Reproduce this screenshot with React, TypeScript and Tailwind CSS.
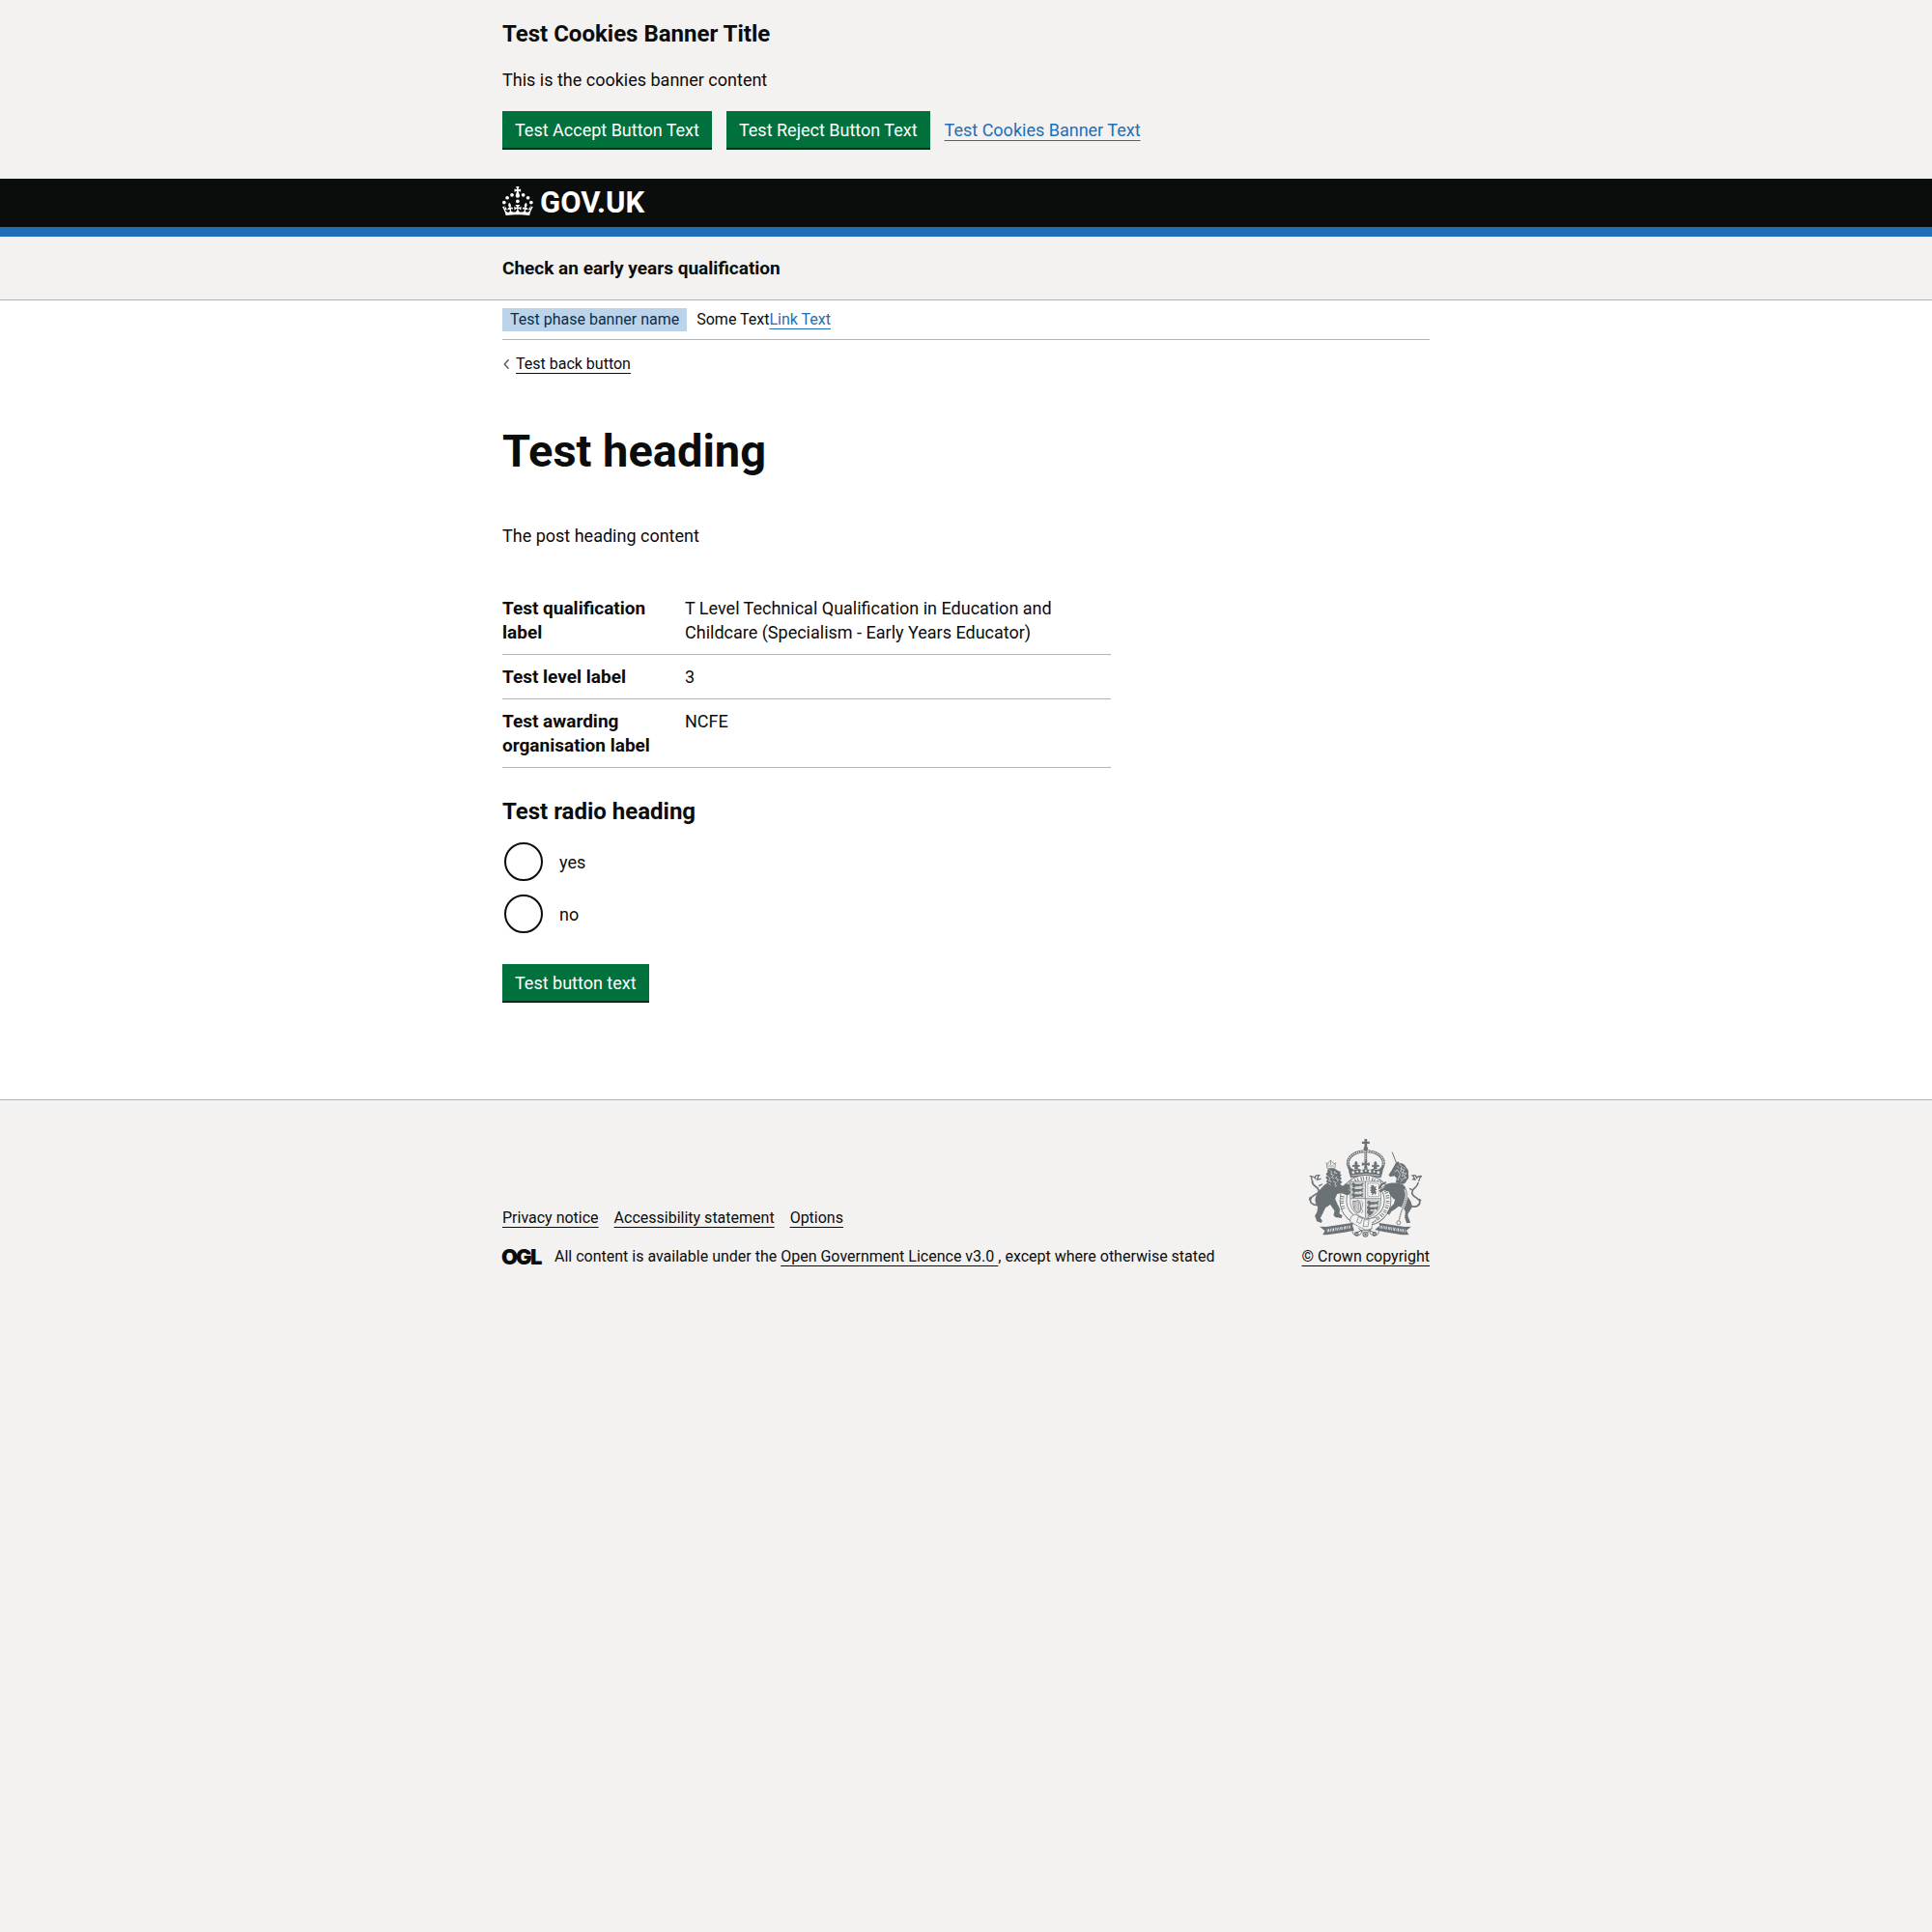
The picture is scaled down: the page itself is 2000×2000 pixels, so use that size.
import type { ReactNode } from 'react';

const wrap = 'mx-auto w-full max-w-[960px]';
const focus = 'focus:outline-3 focus:outline-[#ffdd00]';
const darkLink = `underline decoration-1 underline-offset-4 text-[#0b0c0c] hover:decoration-3 ${focus}`;
const blueLink = `underline decoration-1 underline-offset-4 text-[#1d70b8] hover:decoration-3 ${focus}`;

function Button({ children }: { children: ReactNode }) {
  return (
    <button
      type="button"
      className={`h-[38px] cursor-pointer bg-[#00703c] px-[13px] pt-0.5 text-lg leading-5 text-white shadow-[0_2px_0_#002d18] hover:bg-[#005a30] ${focus}`}
    >
      {children}
    </button>
  );
}

function CrownIcon() {
  return (
    <svg viewBox="0 0 64 60" className="h-[30px] w-8" fill="currentColor" aria-hidden="true">
      <circle cx="20" cy="17.6" r="3.7" />
      <circle cx="10.2" cy="23.5" r="3.7" />
      <circle cx="3.7" cy="33.2" r="3.7" />
      <circle cx="31.7" cy="30.6" r="3.7" />
      <circle cx="43.3" cy="17.6" r="3.7" />
      <circle cx="53.2" cy="23.5" r="3.7" />
      <circle cx="59.7" cy="33.2" r="3.7" />
      <path d="M33.1,9.8c.2-.1.3-.3.5-.5l4.6,2.4v-6.8l-4.6,1.5c-.1-.2-.3-.3-.5-.5l1.9-5.9h-6.7l1.9,5.9c-.2.1-.3.3-.5.5l-4.6-1.5v6.8l4.6-2.4c.1.2.3.3.5.5l-2.6,8c-.9,2.8,1.2,5.7,4.1,5.7h0c3,0,5.1-2.9,4.1-5.7l-2.6-8ZM37,37.9s-3.4,3.8-4.1,6.1c2.2,0,4.2-.5,6.4-2.8l-.7,8.5c-2-2.8-4.4-4.1-5.7-3.8.1,3.1.5,6.7,5.8,7.2,3.7.3,6.7-1.5,7-3.8.4-2.6-2-4.3-3.7-1.6-1.4-4.5,2.4-6.1,4.9-3.2-1.9-4.5-1.8-7.7,2.4-10.9,3,4,2.6,7.3-1.2,11.1,2.4-1.3,6.2,0,4,4.6-1.2-2.8-3.7-2.2-4.2.2-.3,1.7.7,3.7,3,4.2,1.9.3,4.7-.9,7-5.9-1.3,0-2.4.7-3.9,1.7l2.4-8c.6,2.3,1.4,3.7,2.2,4.5.6-1.6.5-2.8,0-5.3l5,1.8c-2.6,3.6-5.2,8.7-7.3,17.5-7.4-1.1-15.7-1.7-24.5-1.7h0c-8.8,0-17.1.6-24.5,1.7-2.1-8.9-4.7-13.9-7.3-17.5l5-1.8c-.5,2.5-.6,3.7,0,5.3.8-.8,1.6-2.3,2.2-4.5l2.4,8c-1.5-1-2.6-1.7-3.9-1.7,2.3,5,5.2,6.2,7,5.9,2.3-.4,3.3-2.4,3-4.2-.5-2.4-3-3.1-4.2-.2-2.2-4.6,1.6-6,4-4.6-3.7-3.7-4.2-7.1-1.2-11.1,4.2,3.2,4.3,6.4,2.4,10.9,2.5-2.8,6.3-1.3,4.9,3.2-1.8-2.7-4.1-1-3.7,1.6.3,2.3,3.3,4.1,7,3.8,5.4-.5,5.7-4.2,5.8-7.2-1.3-.2-3.7,1-5.7,3.8l-.7-8.5c2.2,2.3,4.2,2.7,6.4,2.8-.7-2.3-4.1-6.1-4.1-6.1h10.6,0Z" />
    </svg>
  );
}

function CoatOfArms() {
  const ink = '#6b7276';
  const paper = '#f3f2f1';
  return (
    <svg viewBox="51 26 350 306" className="h-[102px] w-[117px]" fill={ink} stroke="none" aria-hidden="true">
      {/* imperial crown */}
      <path d="M223 26h8v8h8v7h-8v10h-8V41h-8v-7h8z" />
      <circle cx="227" cy="56" r="7" />
      <g fill="none" stroke={ink}>
        <path d="M182 126C156 92 184 66 222 64M272 126C298 92 270 66 232 64" strokeWidth="9" />
        <path d="M182 126C156 92 184 66 222 64M272 126C298 92 270 66 232 64" stroke={paper} strokeWidth="4" strokeDasharray="4 3" />
        <path d="M227 62v34" strokeWidth="8" />
        <path d="M227 64v30" stroke={paper} strokeWidth="3" strokeDasharray="4 3" />
      </g>
      <path d="M222 94h10l-2 8 9-3v11l-9-3 3 11h-12l3-11-9 3V99l9 3z" />
      <path d="M197 94c5 5 7 9 3 14 6-4 10-1 8 5l-6-1 2 8h-13l2-8-8 1c-1-7 3-9 9-5-4-5-2-9 3-14zM257 94c5 5 7 9 3 14 6-4 10-1 9 5l-8-1 2 8h-13l2-8-6 1c-2-6 2-9 8-5-4-5-2-9 3-14z" />
      <path d="M171 104l9 12 11 6 14-3 10 3 12-4 12 4 10-3 14 3 11-6 9-12-4 26-5 17q-47-10-94 0l-5-17z" />
      <g fill={paper}>
        <circle cx="188" cy="130" r="4" /><circle cx="201" cy="127" r="3" /><circle cx="214" cy="127" r="4" />
        <circle cx="227" cy="125" r="3" /><circle cx="240" cy="127" r="4" /><circle cx="253" cy="127" r="3" /><circle cx="266" cy="130" r="4" />
      </g>
      <path d="M183 140q44-9 88 0" stroke={paper} strokeWidth="2" fill="none" />

      {/* garter ring */}
      <ellipse cx="226" cy="217" rx="69" ry="68" fill="none" stroke={ink} strokeWidth="23" />
      <ellipse cx="226" cy="217" rx="69" ry="68" fill="none" stroke={paper} strokeWidth="18" />
      <g fill="none" stroke={ink} strokeWidth="11">
        <path d="M158 243A69 68 0 0 1 188 160" strokeDasharray="2.5 4 3 7 2.5 3 2.5 6" />
        <path d="M194 156A69 68 0 0 1 266 161" strokeDasharray="3 5 2.5 8 3 4 2.5 7" />
        <path d="M280 174A69 68 0 0 1 246 282" strokeDasharray="2.5 4 3 7 2.5 3 2.5 6" />
      </g>

      {/* quartered shield */}
      <path d="M179 158h95v62c0 28-21 44-47 54-27-10-48-26-48-54z" fill={paper} stroke={ink} strokeWidth="2" />
      <path d="M180 159h46v52h-46zM228 212h45v8c0 24-20 42-45 52z" opacity=".22" />
      <path d="M226 158v113M180 211h94" stroke={ink} strokeWidth="2" />
      <g>
        <path id="passant" d="M184 164l6-3 4 5h18l6-4 2 3-4 4 3 5h-5l-4-3-5 3-8-1-5 4-7-1 3-4-5-2z" />
        <use href="#passant" y="16" />
        <use href="#passant" y="32" />
        <use href="#passant" x="48" y="56" />
        <use href="#passant" x="47" y="72" />
        <path d="M231 249l6-3 4 4h12l-8 11-12 7 3-8-5-3z" />
      </g>
      <path d="M233 164h35v41h-35z" fill="none" stroke={ink} strokeWidth="2" strokeDasharray="4 1.5" />
      <path d="M243 171l7-2 4 6 7-3-4 7 5 5-6 2 4 6-3 8-4-5-4 4-4 2 2-6-6-2 4-4-6-3 6-4-6-4 5-2z" />
      <path d="M188 218c5 3 9 1 17-1 6 5 7 22 4 36l-8 2c-9-4-14-18-13-37z" fill="none" stroke={ink} strokeWidth="3" />
      <path d="M193 221v20M197 221v27M201 220v32M205 221v31" stroke={ink} strokeWidth="1.5" />
      <path d="M212 217l6 8-4 20 5 6-6 6" fill="none" stroke={ink} strokeWidth="2" />

      {/* lion */}
      <path d="M105 100l4 5 4-8 5-4 5 4 5 8 5-5-2 17h-24z" fill="none" stroke={ink} strokeWidth="2" />
      <path d="M118 93v14M108 110h20" stroke={ink} strokeWidth="2" />
      <path d="M108 121l10-4 14 2 9 6 8 3-2 6 5 5-5 4 6 7-6 3 7 8-6 4 2 8-10 2-6 6-8-5-8 3-4-8-7-2 3-6-7-5 5-5-6-7 5-5-4-7 5-4z" />
      <path d="M112 160C95 168 82 186 73 202c-6 14-2 26 5 34l-2 16-7 13 6 17 14 5 3-7-6-8 8-16 8-16 15-10 6 10 7 9-3 13 5 7 20 3 2-8-9-6 2-14-9-18-6-14 6-15 16-4 13 8 8-2 6-8-8-8-20-10z" />
      <path d="M142 165l14 7 10-9 4 5 8-1-2 8 4 6-10 4-24-4z" />
      <g fill="none" stroke={ink} strokeLinecap="round">
        <path d="M84 231c-24 4-35-11-26-23 9-12 27-10 22-25-4-10-20-11-19-24" strokeWidth="5" />
        <path d="M62 158c-6-6-1-13-6-16 7-1 9 2 14 6-1-8 3-10 12-9-6 5-1 9-8 14l13-3M54 207l-2 7M82 172l9-5M84 186l5 4" strokeWidth="4" />
      </g>
      <g fill="none" stroke={paper} strokeWidth="2">
        <path d="M115 123l7 6-4 6 9 3-6 7 8 4M132 125l-3 6 9 2M108 141l8 7-4 8 9 3M125 157l9 5-3 9M138 142l-5 6 9 4-4 7M112 165l6 4M138 170l-6 5" />
      </g>

      {/* unicorn */}
      <path d="M309 67l14 36" stroke={ink} strokeWidth="3" />
      <path d="M320 101l7-5 5 5c10 0 18 6 21 14 6 6 8 14 6 20 3 8 1 16-5 20-1 6-6 10-12 11l-22-4 3-14-7-7-13 3-5-6 9-14z" />
      <g fill="none" stroke={paper} strokeWidth="2">
        <path d="M330 103l10 9-5 6 12 4-6 7 12 5-9 7 9 5-12 5M324 112l6 2M316 128l9-6 9 14-8 19M337 118l-2 9 8 6-4 11M344 112l5 6M334 148l6 6-4 5" />
      </g>
      <path d="M288 168c14-8 37-6 52-2 12 6 16 22 14 34 6 12 18 22 16 38-4 12-14 16-12 28l8 20-12 2-6-18 2-18c-4-12-14-16-22-16l-10 8-12 8-6 10-8-6 10-16 12-12 4-14c-10-4-16-14-18-24l-16-4-12 6-4-6 14-8z" />
      <path d="M290 164l-12 6-5 10-7 2 2-9 8-9 14-6z" />
      <g fill="none" stroke={ink}>
        <path d="M364 233c16 8 30 1 31-11 0-14-29-16-24-32 3-12 17-13 19-29" strokeWidth="5" />
        <path d="M390 158c5-4 3-13 10-16-7-2-11 1-15 5-1-8-6-9-13-7 7 4 3 9 10 13l-11-2M371 184l-8-4M393 213l6 5" strokeWidth="4" />
        <path d="M349 181c9 16 5 24 2 34-3 14-11 28-15 42" stroke={paper} strokeWidth="8" />
        <path d="M349 181c9 16 5 24 2 34-3 14-11 28-15 42l-6 22" strokeWidth="4" strokeDasharray="4 2" />
        <circle cx="329" cy="286" r="6" strokeWidth="2.5" />
      </g>

      {/* compartment, buckle and motto ribbons */}
      <path d="M181 267l13-7 22 12 24 2 19-5 3 7-14 9-3 20-17 4-20-9-12-7-18-10z" fill={paper} stroke={ink} strokeWidth="2" />
      <path d="M205 267l12 6-7 16-11-5zM222 277h15l-3 21h-15z" fill="none" stroke={ink} strokeWidth="2" />
      <path d="M84 298l20 1 84-13-2 10 5 14-30 6-54 8-14 0 7-12z" />
      <path d="M368 298l-20 1-80-12 2 9-15 12 26 6 58 10 22 0-8-13z" />
      <g fill="none" stroke={ink} strokeWidth="3">
        <path d="M188 303c-6 13 1 23 12 23 10 0 16-7 14-18M266 303c5 13-1 23-13 23-10 0-15-7-13-18M197 317q29-15 58 0M205 303l12 13M246 303l-12 13" />
      </g>
      <circle cx="198" cy="321" r="7" />
      <circle cx="226" cy="322" r="9" />
      <circle cx="254" cy="321" r="7" />
      <g fill="none" stroke={paper} strokeWidth="2">
        <circle cx="226" cy="322" r="5" />
        <path d="M194 321h8M250 321h8" />
      </g>
      <g fill="none" stroke={paper} strokeWidth="9">
        <path d="M107 311l72-12" strokeDasharray="2 2 3 3 2 3 2 2 3 4" />
        <path d="M271 299l80 13" strokeDasharray="2 2 3 3 2 3 2 2 3 4" />
      </g>
    </svg>
  );
}

const rows = [
  ['Test qualification label', 'T Level Technical Qualification in Education and Childcare (Specialism - Early Years Educator)'],
  ['Test level label', '3'],
  ['Test awarding organisation label', 'NCFE'],
];

export default function App() {
  return (
    <div className="flex min-h-screen flex-col bg-[#f3f2f1] font-[Roboto,'Liberation_Sans',sans-serif] text-lg leading-[25px] text-[#0b0c0c]">
      <section aria-label="Cookies" className="pt-5 pb-8">
        <div className={wrap}>
          <h2 className="text-2xl leading-[30px] font-bold">Test Cookies Banner Title</h2>
          <p className="mt-5">This is the cookies banner content</p>
          <div className="mt-5 flex flex-wrap items-center gap-[15px]">
            <Button>Test Accept Button Text</Button>
            <Button>Test Reject Button Text</Button>
            <a href="#cookies" className={blueLink}>Test Cookies Banner Text</a>
          </div>
        </div>
      </section>

      <header>
        <div className="border-b-10 border-[#1d70b8] bg-[#0b0c0c]">
          <div className={`${wrap} flex h-[50px] items-center`}>
            <a href="#home" className={`flex items-center gap-[7px] text-white ${focus}`}>
              <span className="pb-1"><CrownIcon /></span>
              <span className="text-[31px] leading-[30px] font-bold">GOV.UK</span>
            </a>
          </div>
        </div>
        <div className="border-b border-[#b1b4b6]">
          <div className={`${wrap} py-5 text-[19px] font-bold`}>
            <a href="#service" className={focus}>Check an early years qualification</a>
          </div>
        </div>
      </header>

      <div className="bg-white">
        <div className={wrap}>
          <div className="flex items-center gap-2.5 border-b border-[#b1b4b6] py-2 text-base">
            <strong className="bg-[#bbd4ea] px-2 font-normal text-[#0c2d4a]">Test phase banner name</strong>
            <span>Some Text<a href="#feedback" className={blueLink}>Link Text</a></span>
          </div>
          <div className="mt-[13px] flex items-center gap-1.5 text-base">
            <svg viewBox="0 0 8 10" className="h-2.5 w-2" fill="none" stroke="#505a5f" strokeWidth="1.4" aria-hidden="true">
              <path d="M6.5.2 2.3 5l4.2 4.8" />
            </svg>
            <a href="#back" className={darkLink}>Test back button</a>
          </div>

          <main className="pt-[53px] pb-[102px]">
            <h1 className="text-[47px] leading-[50px] font-bold">Test heading</h1>
            <p className="mt-[50px]">The post heading content</p>

            <dl className="mt-10 w-full max-w-[630px]">
              {rows.map(([label, value]) => (
                <div key={label} className="grid grid-cols-[30%_70%] border-b border-[#b1b4b6] py-2.5">
                  <dt className="pr-5 text-[19px] font-bold">{label}</dt>
                  <dd className="pr-5">{value}</dd>
                </div>
              ))}
            </dl>

            <fieldset className="mt-[30px]">
              <legend className="text-2xl leading-[30px] font-bold">Test radio heading</legend>
              <div className="mt-[17px] ml-0.5 flex flex-col gap-3.5">
                {['yes', 'no'].map((v) => (
                  <div key={v} className="flex items-center gap-[17px]">
                    <input
                      id={`answer-${v}`}
                      type="radio"
                      name="answer"
                      value={v}
                      className="size-10 appearance-none rounded-full border-2 border-[#0b0c0c] bg-white checked:bg-[#0b0c0c] checked:shadow-[inset_0_0_0_8px_white] focus:outline-3 focus:outline-[#ffdd00]"
                    />
                    <label htmlFor={`answer-${v}`}>{v}</label>
                  </div>
                ))}
              </div>
            </fieldset>

            <div className="mt-8 flex">
              <Button>Test button text</Button>
            </div>
          </main>
        </div>
      </div>

      <footer className="border-t border-[#b1b4b6] pt-10 text-base">
        <div className={`${wrap} flex items-end justify-between gap-8`}>
          <div>
            <ul className="flex gap-4">
              <li><a href="#privacy" className={darkLink}>Privacy notice</a></li>
              <li><a href="#accessibility" className={darkLink}>Accessibility statement</a></li>
              <li><a href="#options" className={darkLink}>Options</a></li>
            </ul>
            <div className="mt-4 flex items-center gap-3">
              <svg viewBox="0 0 42 18" className="h-[18px] w-[42px] shrink-0 overflow-visible" fill="#0b0c0c" fontFamily="Inter, sans-serif" fontWeight="900" fontSize="22">
                <text x="-1" y="17">O</text>
                <text x="14" y="17">G</text>
                <text x="29" y="17">L</text>
              </svg>
              <span>
                All content is available under the <a href="#licence" className={darkLink}>Open Government Licence v3.0&nbsp;</a>, except where otherwise stated
              </span>
            </div>
          </div>
          <a href="#copyright" className={`flex flex-col items-center gap-2 ${darkLink}`}>
            <CoatOfArms />
            <span>© Crown copyright</span>
          </a>
        </div>
      </footer>
    </div>
  );
}
